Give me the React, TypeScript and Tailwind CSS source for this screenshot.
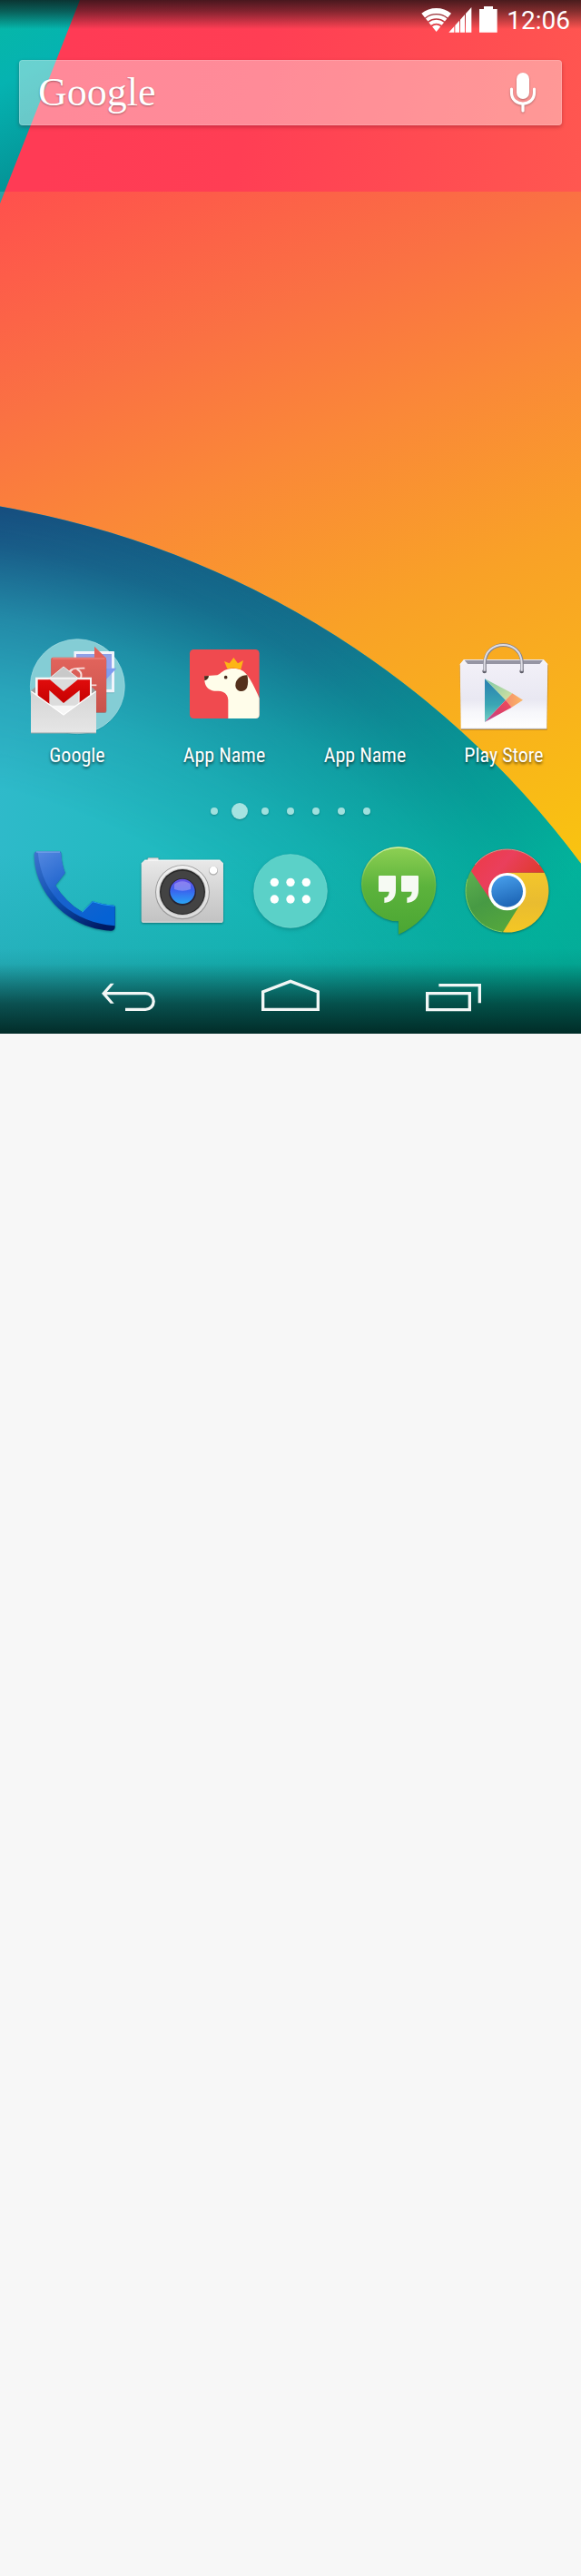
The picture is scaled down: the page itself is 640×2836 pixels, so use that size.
import type { ReactNode } from "react";

function Wallpaper() {
  return (
    <svg
      className="absolute inset-0 -z-10 h-full w-full"
      viewBox="0 0 640 1138"
      preserveAspectRatio="none"
      aria-hidden="true"
    >
      <defs>
        <linearGradient id="wpRed" gradientUnits="userSpaceOnUse" x1="60" y1="120" x2="640" y2="260">
          <stop offset="0" stopColor="#ff3b55" />
          <stop offset="0.35" stopColor="#ff3e54" />
          <stop offset="1" stopColor="#ff5850" />
        </linearGradient>
        <linearGradient id="wpOrange" gradientUnits="userSpaceOnUse" x1="0" y1="211" x2="334" y2="1069">
          <stop offset="0" stopColor="#ff504d" />
          <stop offset="0.25" stopColor="#fa7143" />
          <stop offset="0.42" stopColor="#fa8838" />
          <stop offset="0.63" stopColor="#f9a127" />
          <stop offset="1" stopColor="#f9c410" />
        </linearGradient>
        <linearGradient id="wpCorner" x1="0" y1="0" x2="0.2" y2="1">
          <stop offset="0" stopColor="#06b8a6" />
          <stop offset="0.4" stopColor="#05b3b1" />
          <stop offset="1" stopColor="#048e92" />
        </linearGradient>
        <linearGradient id="wpTeal" gradientUnits="userSpaceOnUse" x1="0" y1="860" x2="640" y2="1000">
          <stop offset="0" stopColor="#2fbaca" />
          <stop offset="0.5" stopColor="#16bab8" />
          <stop offset="1" stopColor="#02bb9f" />
        </linearGradient>
        <linearGradient id="wpDeep" gradientUnits="userSpaceOnUse" x1="0" y1="557" x2="640" y2="950">
          <stop offset="0" stopColor="#164d7e" />
          <stop offset="0.5" stopColor="#13708c" />
          <stop offset="0.85" stopColor="#059e96" />
          <stop offset="1" stopColor="#02b39b" />
        </linearGradient>
        <radialGradient id="wpFade" gradientUnits="userSpaceOnUse" cx="-171" cy="1553" r="1010">
          <stop offset="0.7" stopColor="#000" />
          <stop offset="0.8" stopColor="#333" />
          <stop offset="0.88" stopColor="#777" />
          <stop offset="0.96" stopColor="#e4e4e4" />
          <stop offset="1" stopColor="#fff" />
        </radialGradient>
        <mask id="wpMask" maskUnits="userSpaceOnUse" x="0" y="500" width="640" height="638">
          <rect y="500" width="640" height="638" fill="url(#wpFade)" />
        </mask>
        <linearGradient id="wpLow" x1="0" y1="0" x2="0" y2="1">
          <stop offset="0" stopColor="#0a8c8c" stopOpacity="0" />
          <stop offset="1" stopColor="#0a8c8c" stopOpacity="0.35" />
        </linearGradient>
        <linearGradient id="wpNav" x1="0" y1="0" x2="0" y2="1">
          <stop offset="0" stopColor="#00231f" stopOpacity="0" />
          <stop offset="0.18" stopColor="#00231f" stopOpacity="0.06" />
          <stop offset="0.42" stopColor="#00231f" stopOpacity="0.38" />
          <stop offset="0.65" stopColor="#00231f" stopOpacity="0.67" />
          <stop offset="1" stopColor="#00231f" stopOpacity="0.93" />
        </linearGradient>
        <linearGradient id="wpTop" x1="0" y1="0" x2="0" y2="1">
          <stop offset="0" stopColor="#0c0a0c" stopOpacity="0.75" />
          <stop offset="0.4" stopColor="#0c0a0c" stopOpacity="0.5" />
          <stop offset="1" stopColor="#0c0a0c" stopOpacity="0" />
        </linearGradient>
      </defs>
      <rect width="640" height="212" fill="url(#wpRed)" />
      <rect y="211" width="640" height="927" fill="url(#wpOrange)" />
      <path d="M0 0H88L0 224Z" fill="url(#wpCorner)" />
      <path d="M0 211H5L0 224Z" fill="#fff" opacity="0.15" />
      <circle cx="-171" cy="1553" r="1010" fill="url(#wpTeal)" />
      <circle cx="-171" cy="1553" r="1010" fill="url(#wpDeep)" mask="url(#wpMask)" />
      <rect y="940" width="640" height="198" fill="url(#wpLow)" />
      <rect y="1044" width="640" height="94" fill="url(#wpNav)" />
      <rect width="640" height="32" fill="url(#wpTop)" />
    </svg>
  );
}

function StatusIcons() {
  return (
    <svg className="h-[31px] w-[88px]" viewBox="66 18 264 93" fill="#fff" aria-hidden="true">
      <path d="M122 105L108.200 88A22 22 0 0 1 135.800 88Z" />
      <g fill="none" stroke="#fff">
        <path d="M100.600 78.600A34 34 0 0 1 143.400 78.600" strokeWidth="12" />
        <path d="M90.500 66.100A50 50 0 0 1 153.500 66.100" strokeWidth="12" />
        <path d="M78.600 51.400A69 69 0 0 1 165.400 51.400" strokeWidth="18" />
      </g>
      <path d="M163 107L181 87V107ZM184 84L198 68V107H184ZM201 65L216 48V107H201ZM219 45L238 24V107H219Z" />
      <path d="M264 30H279V21H309V30H323V107H264Z" />
    </svg>
  );
}

function MicIcon() {
  return (
    <svg className="h-12 w-9 drop-shadow-[0_1px_1px_rgba(0,0,0,0.3)]" viewBox="0 0 36 48" aria-hidden="true">
      <rect x="11" y="2" width="14" height="29" rx="7" fill="#fff" />
      <path d="M5.500 20V24C5.500 40 30.500 40 30.500 24V20M18 36V44" fill="none" stroke="#fff" strokeWidth="3.200" strokeLinecap="round" />
    </svg>
  );
}

function FolderIcon() {
  return (
    <svg className="size-28" viewBox="27 0 336 336" aria-hidden="true">
      <defs>
        <linearGradient id="envelope" x1="0" y1="0" x2="0" y2="1">
          <stop offset="0" stopColor="#d4d4d4" />
          <stop offset="1" stopColor="#e6e6e6" />
        </linearGradient>
        <linearGradient id="letterM" x1="0" y1="0" x2="0" y2="1">
          <stop offset="0" stopColor="#e00c0c" />
          <stop offset="1" stopColor="#c40000" />
        </linearGradient>
        <linearGradient id="plusCard" x1="0" y1="0" x2="0" y2="1">
          <stop offset="0" stopColor="#e2645c" />
          <stop offset="1" stopColor="#c8524b" />
        </linearGradient>
        <linearGradient id="photo" x1="0" y1="0" x2="0" y2="1">
          <stop offset="0" stopColor="#8f9fe6" />
          <stop offset="1" stopColor="#a4dbe4" />
        </linearGradient>
      </defs>
      <circle cx="196" cy="171" r="156" fill="#0a6f80" opacity="0.25" />
      <circle cx="196" cy="167" r="156" fill="#84cdd5" stroke="#a5dde2" strokeWidth="2" />
      <rect x="184" y="54" width="134" height="136" rx="3" fill="#5b9aa6" opacity="0.5" />
      <rect x="184" y="51" width="134" height="136" rx="2" fill="#f1f4fb" />
      <rect x="192" y="60" width="117" height="117" fill="url(#photo)" />
      <path d="M252 35L292 75H252Z" fill="#e2625a" />
      <path d="M325 107L290 145V107Z" fill="#7f9cf0" />
      <path d="M292 75H309V107H292Z" fill="#93a2ee" />
      <rect x="108" y="74" width="184" height="181" rx="6" fill="#9e4945" opacity="0.6" />
      <rect x="109" y="71" width="182" height="181" rx="6" fill="url(#plusCard)" />
      <path d="M114 75H286" stroke="#ee8b85" strokeWidth="3" />
      <g fill="none" stroke="#f8dedb">
        <path d="M166 122C174 106 194 107 220 107" strokeWidth="5" />
        <path d="M194 110C216 122 212 148 190 146M178 112C166 120 170 132 178 138" strokeWidth="6" />
        <path d="M234 163H259" strokeWidth="5" />
      </g>
      <path d="M42 182L58 168H242L258 182V320H42Z" fill="#9c9c9c" />
      <path d="M104 140L150 102L198 140Z" fill="#c9c9c9" stroke="#ededed" strokeWidth="3" />
      <path d="M57 137H243V210L150 264L57 210Z" fill="#f6f6f6" />
      <path d="M100 143H200V230H100Z" fill="#dcdcdc" />
      <path d="M65 145H105L150 183L197 145H237V207L203 228V180L150 222L103 180V228L65 207Z" fill="url(#letterM)" />
      <path d="M42 182L150 262L258 182V321H42Z" fill="url(#envelope)" />
      <path d="M43 183L150 261L257 183" fill="none" stroke="#fff" strokeWidth="4" />
      <path d="M42 321H258" stroke="#9aa5a6" strokeWidth="3" />
    </svg>
  );
}

function DogIcon() {
  return (
    <svg className="size-28" viewBox="573 60 336 336" aria-hidden="true">
      <rect x="627" y="105" width="230" height="228" rx="13" fill="#f04a4f" />
      <path
        d="M754 333V272C753 254 742 243 722 242H708C688 240 676 226 676 205V193L718 190C732 184 738 170 764 168C790 166 806 174 818 191C834 214 846 240 857 266V320Q857 333 844 333Z"
        fill="#fffdea"
      />
      <path d="M675 193L690 192Q690 204 676 208Z" fill="#472b1b" />
      <circle cx="746" cy="197" r="5.500" fill="#472b1b" />
      <path d="M817 190C798 189 778 202 778 224C779 246 808 249 816 232C821 218 820 204 817 190Z" fill="#54311c" />
      <path d="M741 144L758 151L772 132L786 151L804 141L796 171Q774 163 751 169Z" fill="#fdb515" />
    </svg>
  );
}

function PlayStoreIcon() {
  return (
    <svg className="size-28" viewBox="537 60 336 336" aria-hidden="true">
      <defs>
        <linearGradient id="bag" x1="0" y1="0" x2="0" y2="1">
          <stop offset="0" stopColor="#f2f0f8" />
          <stop offset="0.55" stopColor="#e9e8f2" />
          <stop offset="0.75" stopColor="#f7f7fb" />
          <stop offset="1" stopColor="#ffffff" />
        </linearGradient>
        <linearGradient id="playBlue" x1="0" y1="0" x2="0" y2="1">
          <stop offset="0" stopColor="#2a7fb0" />
          <stop offset="0.6" stopColor="#3aa6b4" />
          <stop offset="1" stopColor="#74cfc4" />
        </linearGradient>
        <linearGradient id="playGreen" x1="0" y1="0" x2="1" y2="1">
          <stop offset="0" stopColor="#7cc8a8" />
          <stop offset="1" stopColor="#d6e2a0" />
        </linearGradient>
        <linearGradient id="playRed" x1="1" y1="0" x2="0" y2="1">
          <stop offset="0" stopColor="#f0505a" />
          <stop offset="0.5" stopColor="#dc3f68" />
          <stop offset="1" stopColor="#b04a9c" />
        </linearGradient>
        <linearGradient id="playOrange" x1="0" y1="0" x2="1" y2="0">
          <stop offset="0" stopColor="#f5906c" />
          <stop offset="1" stopColor="#fbb765" />
        </linearGradient>
      </defs>
      <path d="M559 157L564 371H848L852 157Z" fill="#8b5a10" opacity="0.55" />
      <path d="M561 153L573 138H836L850 153Z" fill="#e6e5ee" />
      <path d="M573 141H836L828 154H580Z" fill="#9695a3" />
      <path d="M573 138L586 154H560ZM836 138L823 154H850Z" fill="#f4f3f8" />
      <path d="M560 153H850L847 367H563Z" fill="url(#bag)" />
      <path d="M563 367H847" stroke="#b9b6bd" strokeWidth="3" />
      <circle cx="641" cy="177" r="7" fill="#5e5d68" />
      <circle cx="764" cy="177" r="7" fill="#5e5d68" />
      <path d="M642 178V152C642 70 765 70 765 152V178" fill="none" stroke="#84838f" strokeWidth="11" />
      <path d="M641 176V152C641 69 764 69 764 152V176" fill="none" stroke="#dedde5" strokeWidth="6" />
      <path d="M642 202L711 272L642 345Z" fill="url(#playBlue)" />
      <path d="M642 202L733 250L711 272Z" fill="url(#playGreen)" />
      <path d="M733 250L768 272L731 296L711 272Z" fill="url(#playOrange)" />
      <path d="M711 272L731 296L642 345Z" fill="url(#playRed)" />
    </svg>
  );
}

function PhoneIcon() {
  return (
    <svg className="h-28 w-26 drop-shadow-[0_1px_1px_rgba(0,40,60,0.4)]" viewBox="90 162 312 336" aria-hidden="true">
      <defs>
        <linearGradient id="phoneEdge" x1="0" y1="0" x2="0.8" y2="1">
          <stop offset="0" stopColor="#3f74cf" />
          <stop offset="0.5" stopColor="#0d4fb0" />
          <stop offset="1" stopColor="#001a62" />
        </linearGradient>
        <linearGradient id="phoneFace" x1="0" y1="0" x2="0.7" y2="1">
          <stop offset="0" stopColor="#5488e0" />
          <stop offset="0.5" stopColor="#1c62cc" />
          <stop offset="1" stopColor="#0562d4" />
        </linearGradient>
      </defs>
      <path
        d="M113 210Q113 199 124 199H196Q201 199 202 205Q203 238 215 270L183 311Q215 365 272 400L306 364Q340 376 376 377Q380 378 380 384V450Q379 461 366 461C230 455 113 340 113 210Z"
        fill="url(#phoneEdge)"
      />
      <path
        d="M125 201H196Q201 201 202 207Q203 238 215 270L183 311Q215 365 272 400L306 364Q340 376 376 377Q380 378 380 384V445C245 434 138 350 125 201Z"
        fill="url(#phoneFace)"
      />
      <path d="M120 201H198" stroke="#86b0ee" strokeWidth="3" />
      <path d="M272 400L306 365Q340 377 378 379" fill="none" stroke="#1ea0f0" strokeWidth="3" />
    </svg>
  );
}

function CameraIcon() {
  return (
    <svg className="h-28 w-26 drop-shadow-[0_1px_1px_rgba(0,50,50,0.5)]" viewBox="447 162 312 336" aria-hidden="true">
      <defs>
        <linearGradient id="camBody" x1="0" y1="0" x2="0" y2="1">
          <stop offset="0" stopColor="#e9e9e9" />
          <stop offset="0.5" stopColor="#d4d4d4" />
          <stop offset="1" stopColor="#c2c2c2" />
        </linearGradient>
        <linearGradient id="camRing" x1="0" y1="0" x2="0" y2="1">
          <stop offset="0" stopColor="#f2f2f2" />
          <stop offset="1" stopColor="#dadada" />
        </linearGradient>
        <linearGradient id="camLens" x1="0" y1="0" x2="0" y2="1">
          <stop offset="0" stopColor="#6a52e8" />
          <stop offset="0.45" stopColor="#3a62ee" />
          <stop offset="1" stopColor="#2aa4f4" />
        </linearGradient>
      </defs>
      <rect x="488" y="220" width="36" height="14" rx="4" fill="#e3e3e3" stroke="#8d9a9a" strokeWidth="1.500" />
      <path d="M467 238L478 227H727L738 238V428Q738 434 732 434H473Q467 434 467 428Z" fill="url(#camBody)" />
      <path d="M478 228.500H727" stroke="#fafafa" strokeWidth="3" />
      <path d="M470 432.500H735" stroke="#eeeeee" strokeWidth="2" />
      <circle cx="603" cy="334" r="90" fill="#9a9a9a" />
      <circle cx="603" cy="333" r="87" fill="url(#camRing)" />
      <circle cx="603" cy="333" r="78" fill="#c4c4c4" />
      <circle cx="603" cy="333" r="75" fill="#272727" />
      <circle cx="603" cy="334" r="71" fill="#434343" />
      <circle cx="603" cy="333" r="45" fill="#262433" />
      <circle cx="603" cy="331" r="41" fill="url(#camLens)" />
      <path d="M576 308C590 294 616 294 630 308V324Q603 334 576 324Z" fill="#b5aaf8" opacity="0.5" />
      <circle cx="705" cy="263" r="15" fill="#b0b0b0" />
      <circle cx="705" cy="261" r="13" fill="#fff" />
    </svg>
  );
}

function AppsIcon() {
  return (
    <svg className="h-28 w-26 drop-shadow-[0_2px_2px_rgba(0,70,70,0.3)]" viewBox="804 162 312 336" aria-hidden="true">
      <circle cx="960" cy="330" r="121" fill="#5bd1c8" stroke="#7adbd3" strokeWidth="2" />
      <g fill="#fff">
        <circle cx="907" cy="301" r="14" />
        <circle cx="960" cy="301" r="14" />
        <circle cx="1012" cy="301" r="14" />
        <circle cx="907" cy="357" r="14" />
        <circle cx="960" cy="357" r="14" />
        <circle cx="1012" cy="357" r="14" />
      </g>
    </svg>
  );
}

function HangoutsIcon() {
  return (
    <svg className="h-28 w-26 drop-shadow-[0_1px_1px_rgba(0,60,50,0.45)]" viewBox="201 162 312 336" aria-hidden="true">
      <defs>
        <linearGradient id="bubble" x1="0" y1="0" x2="0" y2="1">
          <stop offset="0" stopColor="#8ed053" />
          <stop offset="0.45" stopColor="#5cb33c" />
          <stop offset="1" stopColor="#4ba633" />
        </linearGradient>
        <linearGradient id="bubbleRim" x1="0" y1="0" x2="0" y2="1">
          <stop offset="0" stopColor="#d3efa4" />
          <stop offset="0.4" stopColor="#7cc353" stopOpacity="0.4" />
          <stop offset="1" stopColor="#4ba633" stopOpacity="0" />
        </linearGradient>
      </defs>
      <path
        d="M357 184A123 123 0 1 0 357 430V473C425 443 481 385 481 309A124 124 0 0 0 357 184Z"
        fill="url(#bubble)"
      />
      <path
        d="M357 186A121 121 0 1 0 357 428V469C424 441 479 384 479 309A122 122 0 0 0 357 186Z"
        fill="none"
        stroke="url(#bubbleRim)"
        strokeWidth="4"
      />
      <g fill="#f6faf3">
        <path d="M294 279H345Q348 279 348 282V328C348 352 334 368 310 369V352Q326 350 326 332H294Q291 332 291 329V282Q291 279 294 279Z" />
        <path d="M369 279H420Q423 279 423 282V328C423 352 409 368 385 369V352Q401 350 401 332H369Q366 332 366 329V282Q366 279 369 279Z" />
      </g>
    </svg>
  );
}

function ChromeIcon() {
  return (
    <svg className="h-28 w-26 drop-shadow-[0_1px_1px_rgba(0,60,50,0.5)]" viewBox="558 162 312 336" aria-hidden="true">
      <defs>
        <linearGradient id="chRed" x1="0" y1="0" x2="1" y2="0.6">
          <stop offset="0" stopColor="#ee3a44" />
          <stop offset="0.45" stopColor="#ea3f5c" />
          <stop offset="1" stopColor="#dc3a22" />
        </linearGradient>
        <linearGradient id="chGreen" x1="0" y1="0" x2="0.5" y2="1">
          <stop offset="0" stopColor="#6cbc58" />
          <stop offset="0.6" stopColor="#479a44" />
          <stop offset="1" stopColor="#55a83c" />
        </linearGradient>
        <linearGradient id="chYellow" x1="0" y1="0" x2="0" y2="1">
          <stop offset="0" stopColor="#f4c62c" />
          <stop offset="0.5" stopColor="#e9bc30" />
          <stop offset="1" stopColor="#f4c724" />
        </linearGradient>
        <linearGradient id="chBlue" x1="0" y1="0" x2="0.3" y2="1">
          <stop offset="0" stopColor="#4aa2ee" />
          <stop offset="1" stopColor="#1f68b8" />
        </linearGradient>
      </defs>
      <circle cx="716" cy="329" r="137" fill="url(#chGreen)" />
      <path d="M716 269H839A137 137 0 0 1 702 466L768 359Z" fill="url(#chYellow)" />
      <path d="M597 264A137 137 0 0 1 839 269H716L700 330L660 358Z" fill="url(#chRed)" />
      <path d="M585 290A136 136 0 0 0 700 465" fill="none" stroke="#86cf5e" strokeWidth="3" />
      <path d="M610 243A136 136 0 0 1 822 243" fill="none" stroke="#f47a86" strokeWidth="3" />
      <circle cx="716" cy="332" r="62" fill="#fff" />
      <circle cx="716" cy="331" r="52" fill="url(#chBlue)" />
    </svg>
  );
}

function AppTile({ label, children }: { label: string; children?: ReactNode }) {
  return (
    <button type="button" className="flex flex-col items-center gap-1.5">
      <span className="block h-28 w-28">{children}</span>
      <span className="font-['Roboto_Condensed','Liberation_Sans_Narrow',Roboto,sans-serif] text-[22px] leading-7 whitespace-nowrap text-white [text-shadow:0_2px_3px_rgba(0,0,0,0.6)]">
        {label}
      </span>
    </button>
  );
}

const pages = [0, 1, 2, 3, 4, 5, 6];

export default function App() {
  return (
    <div className="min-h-screen bg-[#f7f7f7]">
      <main className="relative isolate flex flex-col overflow-hidden pb-5">
        <Wallpaper />

        <header className="flex h-[42px] items-start justify-end gap-2 pt-1.5 pr-3">
          <StatusIcons />
          <time className="font-[Roboto,sans-serif] text-[28px] leading-[34px] text-white">12:06</time>
        </header>

        <form
          role="search"
          className="mx-[21px] mt-6 flex h-[72px] items-center rounded-sm border border-white/15 bg-white/40 pr-[22px] pl-5 shadow-[0_2px_4px_rgba(80,0,20,0.3)]"
        >
          <label
            htmlFor="query"
            className="font-['Liberation_Serif',serif] text-[44px] leading-[56px] text-white [text-shadow:0_1px_2px_rgba(0,0,0,0.35)]"
          >
            Google
          </label>
          <input id="query" type="text" className="h-full min-w-0 flex-1 bg-transparent px-3 text-2xl text-white outline-none" />
          <button type="button" aria-label="Voice search" className="flex w-10 justify-center">
            <MicIcon />
          </button>
        </form>

        <section aria-label="Home apps" className="mt-[562px] grid grid-cols-[162fr_162fr_148fr_158fr] pr-1.5 pl-1">
          <AppTile label="Google">
            <FolderIcon />
          </AppTile>
          <AppTile label="App Name">
            <DogIcon />
          </AppTile>
          <AppTile label="App Name" />
          <AppTile label="Play Store">
            <PlayStoreIcon />
          </AppTile>
        </section>

        <div className="mt-[38px] flex h-[18px] items-center justify-center">
          {pages.map((page) => (
            <span key={page} className="flex w-7 justify-center">
              <span
                className={
                  page === 1
                    ? "size-[18px] rounded-full bg-[#a5e3e1] shadow-[0_1px_2px_rgba(0,70,70,0.4)]"
                    : "size-2 rounded-full bg-[#a0e0de] shadow-[0_1px_2px_rgba(0,70,70,0.4)]"
                }
              />
            </span>
          ))}
        </div>

        <section aria-label="Dock" className="mt-[23px] grid grid-cols-5 justify-items-center px-[22px]">
          <button type="button" aria-label="Phone">
            <PhoneIcon />
          </button>
          <button type="button" aria-label="Camera">
            <CameraIcon />
          </button>
          <button type="button" aria-label="All apps">
            <AppsIcon />
          </button>
          <button type="button" aria-label="Hangouts">
            <HangoutsIcon />
          </button>
          <button type="button" aria-label="Chrome">
            <ChromeIcon />
          </button>
        </section>

        <nav aria-label="System" className="mt-[39px] grid grid-cols-3 justify-items-center px-[52px]">
          <button type="button" aria-label="Back">
            <svg className="h-[42px] w-[68px]" viewBox="324 618 204 126" fill="none" stroke="#f2f7f6" strokeWidth="10">
              <path d="M345 671H484A26.500 26.500 0 0 1 484 724H417" />
              <path d="M368 638H380L352 671L380 704H368L339 671Z" fill="#f2f7f6" stroke="none" />
            </svg>
          </button>
          <button type="button" aria-label="Home">
            <svg className="h-[42px] w-[68px]" viewBox="858 618 204 126" fill="none" stroke="#f2f7f6" strokeWidth="10">
              <path d="M869 724V666L960 631L1051 666V724Z" />
            </svg>
          </button>
          <button type="button" aria-label="Recent apps">
            <svg className="h-[42px] w-[68px]" viewBox="435 618 204 126" fill="none" stroke="#f2f7f6" strokeWidth="10">
              <path d="M452 671H592V725H452ZM490 644H625V703" />
            </svg>
          </button>
        </nav>
      </main>
    </div>
  );
}
